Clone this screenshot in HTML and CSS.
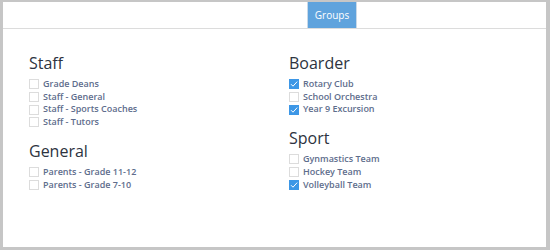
FILE: index.html
```html
<!DOCTYPE html>
<html>
<head>
<meta charset="utf-8">
<link rel="stylesheet" href="styles.css">
</head>
<body>
<div class="frame">
  <div class="tabs">
    <div class="tab active">Groups</div>
  </div>
  <div class="content">
    <div class="col">
      <div class="group">
        <h2>Staff</h2>
        <label class="item"><span class="box"></span>Grade Deans</label>
        <label class="item"><span class="box"></span>Staff - General</label>
        <label class="item"><span class="box"></span>Staff - Sports Coaches</label>
        <label class="item"><span class="box"></span>Staff - Tutors</label>
      </div>
      <div class="group">
        <h2>General</h2>
        <label class="item"><span class="box"></span>Parents - Grade 11-12</label>
        <label class="item"><span class="box"></span>Parents - Grade 7-10</label>
      </div>
    </div>
    <div class="col">
      <div class="group">
        <h2>Boarder</h2>
        <label class="item"><span class="box checked"><svg viewBox="0 0 10 10"><path d="M2 5.2 L4 7.2 L8.2 2.6" fill="none" stroke="#fff" stroke-width="1"/></svg></span>Rotary Club</label>
        <label class="item"><span class="box"></span>School Orchestra</label>
        <label class="item"><span class="box checked"><svg viewBox="0 0 10 10"><path d="M2 5.2 L4 7.2 L8.2 2.6" fill="none" stroke="#fff" stroke-width="1"/></svg></span>Year 9 Excursion</label>
      </div>
      <div class="group">
        <h2>Sport</h2>
        <label class="item"><span class="box"></span>Gynmastics Team</label>
        <label class="item"><span class="box"></span>Hockey Team</label>
        <label class="item"><span class="box checked"><svg viewBox="0 0 10 10"><path d="M2 5.2 L4 7.2 L8.2 2.6" fill="none" stroke="#fff" stroke-width="1"/></svg></span>Volleyball Team</label>
      </div>
    </div>
  </div>
</div>
</body>
</html>
```

FILE: styles.css
```css
html, body {
  margin: 0;
  padding: 0;
  height: 100%;
}
body {
  background: #c6c6c6;
  font-family: "Open Sans", "Liberation Sans", sans-serif;
  padding: 2px 4px 3px 3px;
  box-sizing: border-box;
}
.frame {
  background: #fff;
  height: 100%;
  box-sizing: border-box;
}
.tabs {
  display: flex;
  height: 26px;
  border-bottom: 1px solid #dcdcdc;
  padding-left: 304px;
}
.tab {
  width: 50px;
  box-sizing: border-box;
  display: flex;
  align-items: center;
  justify-content: center;
  font-size: 10px;
  color: #fff;
  background: #5fa3dd;
  border-left: 1px solid #c9d9e8;
  border-right: 1px solid #c9d9e8;
}
.content {
  display: grid;
  grid-template-columns: 260px 1fr;
  padding: 23px 0 0 26px;
}
.group {
  display: flex;
  flex-direction: column;
  margin-bottom: 11px;
}
h2 {
  margin: 0 0 4px 0;
  font-size: 16px;
  font-weight: 400;
  line-height: 22px;
  color: #2d3340;
}
.item {
  display: flex;
  align-items: center;
  gap: 4px;
  font-size: 9px;
  font-weight: 600;
  line-height: 12.7px;
  color: #5e6d8c;
}
.box {
  width: 10px;
  height: 10px;
  box-sizing: border-box;
  border: 1px solid #dcdcdc;
  background: #fff;
  display: flex;
}
.box.checked {
  background: #3d97e6;
  border-color: #3d97e6;
}
.box svg {
  width: 10px;
  height: 10px;
  margin: -1px;
}
```
